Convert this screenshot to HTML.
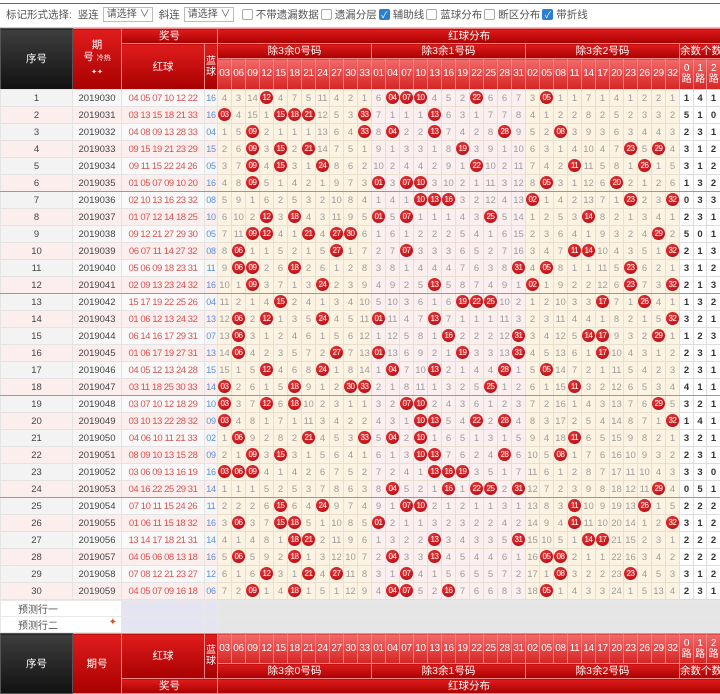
<!DOCTYPE html><html><head><meta charset="utf-8"><style>
*{box-sizing:border-box}
body{margin:0;width:720px;height:693px;overflow:hidden;background:#fff;font-family:"Liberation Sans","Noto Sans CJK SC",sans-serif;font-size:10px}
.bar{height:28px;border-top:2px solid #fff;position:relative;border-bottom:1px solid #ccc;color:#555;font-size:10.5px;display:flex;align-items:center;padding-left:6px;white-space:nowrap}
.bar:before{content:"";position:absolute;left:0;right:0;top:1px;height:1px;background:#d33}
.sel{display:inline-block;border:1px solid #bbb;height:15px;line-height:13px;padding:0 3px;margin:0 6px 0 4px;width:50px;font-size:10px}
.cb{display:inline-block;width:11px;height:11px;border:1px solid #aaa;border-radius:2px;vertical-align:-2px;margin:0 3px 0 2px;background:#fff}
.cb.on{background:#2a7fd4;border-color:#2a7fd4;color:#fff;font-size:9px;line-height:10px;text-align:center}
table{border-collapse:collapse;table-layout:fixed;width:720px}
td,th{padding:0;text-align:center;overflow:hidden;white-space:nowrap}
.h th{color:#fff;font-weight:normal;border:1px solid #e88;background:linear-gradient(#e01c1c,#a80000);font-size:10.5px;line-height:12px}
.h th.k{background:linear-gradient(#3e3e3e,#111);border-color:#555}
.h th.n{background:linear-gradient(#f26a6a,#d62424);font-size:10px;letter-spacing:-0.3px}
.h th.s{font-size:10px;line-height:11px}
.top{height:61px;overflow:hidden}
.d tr{height:17px}
.d td{height:17px;line-height:15px;border:1px solid #eadfcf;color:#9c9c9c;font-size:9.5px}
.d td:nth-child(1){color:#444;background:#f3f3f3;border-color:#e4e4e4}
.d td:nth-child(2){color:#444;background:#f7f7f7;border-color:#e4e4e4}
.d td:nth-child(3){color:#d9534f;background:#f9f9f9;border-color:#e4e4e4;font-size:9.5px;letter-spacing:-0.45px}
.d td:nth-child(4){color:#5a8fd6;background:#f6f6f6;border-color:#e4e4e4;font-size:9px;letter-spacing:-0.3px}
.d tr:nth-child(even) td:nth-child(-n+4){background:#fdeeee}
.d td:nth-child(n+5){background:#fdf3e2}
.d td:nth-child(n+16){background:#fbefef}
.d td:nth-child(n+27){background:#fdf3e2}
.d td:nth-child(n+38){background:#fff;color:#333;font-weight:bold;border-color:#ddd}
.d td:nth-child(16),.d td:nth-child(27),.d td:nth-child(38){border-left:1px solid #d8c8b8}
.d tr.g td{border-bottom:1px solid #999}
td b{display:inline-block;width:13px;height:13px;border-radius:50%;background:radial-gradient(circle at 40% 35%,#e93a3a,#b0000a);color:#fff;font-size:8px;line-height:13px;font-weight:normal;letter-spacing:-0.5px;vertical-align:middle}
.p td{height:16px;border:1px solid #e8e8e8;background:#e6e6e6}
.p td.w{background:#fff;color:#555;text-align:left;padding-left:17px;font-size:10px}
.p td.l{background:#e4e4f2}
</style></head><body>
<div class="bar">标记形式选择:&nbsp; 竖连<span class="sel">请选择 ∨</span>斜连<span class="sel">请选择 ∨</span><span class="cb"></span>不带遗漏数据 <span class="cb"></span>遗漏分层<span class="cb on">✓</span>辅助线 <span class="cb"></span>蓝球分布 <span class="cb"></span>断区分布<span class="cb on">✓</span>带折线</div>
<div class="top"><table class="h"><colgroup><col style="width:72px"><col style="width:49px"><col style="width:83px"><col style="width:13px"><col span="33" style="width:14px"><col style="width:14px"><col style="width:13px"><col style="width:14px"></colgroup>
<tr style="height:15px"><th class="k" rowspan="3">序号</th><th rowspan="3">期<br>号 <span style="font-size:7px">冷热<br>✦✦</span></th><th colspan="2">奖号</th><th colspan="36">红球分布</th></tr>
<tr style="height:15px"><th rowspan="2">红球</th><th rowspan="2" class="s">蓝<br>球</th><th colspan="11">除3余0号码</th><th colspan="11">除3余1号码</th><th colspan="11">除3余2号码</th><th colspan="3">余数个数</th></tr>
<tr style="height:31px"><th class="n">03</th><th class="n">06</th><th class="n">09</th><th class="n">12</th><th class="n">15</th><th class="n">18</th><th class="n">21</th><th class="n">24</th><th class="n">27</th><th class="n">30</th><th class="n">33</th><th class="n">01</th><th class="n">04</th><th class="n">07</th><th class="n">10</th><th class="n">13</th><th class="n">16</th><th class="n">19</th><th class="n">22</th><th class="n">25</th><th class="n">28</th><th class="n">31</th><th class="n">02</th><th class="n">05</th><th class="n">08</th><th class="n">11</th><th class="n">14</th><th class="n">17</th><th class="n">20</th><th class="n">23</th><th class="n">26</th><th class="n">29</th><th class="n">32</th><th class="n s">0<br>路</th><th class="n s">1<br>路</th><th class="n s">2<br>路</th></tr>
</table></div>
<table class="d"><colgroup><col style="width:72px"><col style="width:49px"><col style="width:83px"><col style="width:13px"><col span="33" style="width:14px"><col style="width:14px"><col style="width:13px"><col style="width:14px"></colgroup>
<tr><td>1<td>2019030<td>04 05 07 10 12 22<td>16<td>4<td>3<td>14<td><b>12</b><td>4<td>7<td>5<td>11<td>4<td>2<td>1<td>6<td><b>04</b><td><b>07</b><td><b>10</b><td>4<td>5<td>2<td><b>22</b><td>6<td>6<td>7<td>3<td><b>05</b><td>1<td>1<td>7<td>1<td>4<td>1<td>2<td>2<td>1<td>1<td>4<td>1</tr>
<tr><td>2<td>2019031<td>03 13 15 18 21 33<td>16<td><b>03</b><td>4<td>15<td>1<td><b>15</b><td><b>18</b><td><b>21</b><td>12<td>5<td>3<td><b>33</b><td>7<td>1<td>1<td>1<td><b>13</b><td>6<td>3<td>1<td>7<td>7<td>8<td>4<td>1<td>2<td>2<td>8<td>2<td>5<td>2<td>3<td>3<td>2<td>5<td>1<td>0</tr>
<tr><td>3<td>2019032<td>04 08 09 13 28 33<td>04<td>1<td>5<td><b>09</b><td>2<td>1<td>1<td>1<td>13<td>6<td>4<td><b>33</b><td>8<td><b>04</b><td>2<td>2<td><b>13</b><td>7<td>4<td>2<td>8<td><b>28</b><td>9<td>5<td>2<td><b>08</b><td>3<td>9<td>3<td>6<td>3<td>4<td>4<td>3<td>2<td>3<td>1</tr>
<tr><td>4<td>2019033<td>09 15 19 21 23 29<td>15<td>2<td>6<td><b>09</b><td>3<td><b>15</b><td>2<td><b>21</b><td>14<td>7<td>5<td>1<td>9<td>1<td>3<td>3<td>1<td>8<td><b>19</b><td>3<td>9<td>1<td>10<td>6<td>3<td>1<td>4<td>10<td>4<td>7<td><b>23</b><td>5<td><b>29</b><td>4<td>3<td>1<td>2</tr>
<tr><td>5<td>2019034<td>09 11 15 22 24 26<td>05<td>3<td>7<td><b>09</b><td>4<td><b>15</b><td>3<td>1<td><b>24</b><td>8<td>6<td>2<td>10<td>2<td>4<td>4<td>2<td>9<td>1<td><b>22</b><td>10<td>2<td>11<td>7<td>4<td>2<td><b>11</b><td>11<td>5<td>8<td>1<td><b>26</b><td>1<td>5<td>3<td>1<td>2</tr>
<tr class="g"><td>6<td>2019035<td>01 05 07 09 10 20<td>16<td>4<td>8<td><b>09</b><td>5<td>1<td>4<td>2<td>1<td>9<td>7<td>3<td><b>01</b><td>3<td><b>07</b><td><b>10</b><td>3<td>10<td>2<td>1<td>11<td>3<td>12<td>8<td><b>05</b><td>3<td>1<td>12<td>6<td><b>20</b><td>2<td>1<td>2<td>6<td>1<td>3<td>2</tr>
<tr><td>7<td>2019036<td>02 10 13 16 23 32<td>08<td>5<td>9<td>1<td>6<td>2<td>5<td>3<td>2<td>10<td>8<td>4<td>1<td>4<td>1<td><b>10</b><td><b>13</b><td><b>16</b><td>3<td>2<td>12<td>4<td>13<td><b>02</b><td>1<td>4<td>2<td>13<td>7<td>1<td><b>23</b><td>2<td>3<td><b>32</b><td>0<td>3<td>3</tr>
<tr><td>8<td>2019037<td>01 07 12 14 18 25<td>10<td>6<td>10<td>2<td><b>12</b><td>3<td><b>18</b><td>4<td>3<td>11<td>9<td>5<td><b>01</b><td>5<td><b>07</b><td>1<td>1<td>1<td>4<td>3<td><b>25</b><td>5<td>14<td>1<td>2<td>5<td>3<td><b>14</b><td>8<td>2<td>1<td>3<td>4<td>1<td>2<td>3<td>1</tr>
<tr><td>9<td>2019038<td>09 12 21 27 29 30<td>05<td>7<td>11<td><b>09</b><td><b>12</b><td>4<td>1<td><b>21</b><td>4<td><b>27</b><td><b>30</b><td>6<td>1<td>6<td>1<td>2<td>2<td>2<td>5<td>4<td>1<td>6<td>15<td>2<td>3<td>6<td>4<td>1<td>9<td>3<td>2<td>4<td><b>29</b><td>2<td>5<td>0<td>1</tr>
<tr><td>10<td>2019039<td>06 07 11 14 27 32<td>08<td>8<td><b>06</b><td>1<td>1<td>5<td>2<td>1<td>5<td><b>27</b><td>1<td>7<td>2<td>7<td><b>07</b><td>3<td>3<td>3<td>6<td>5<td>2<td>7<td>16<td>3<td>4<td>7<td><b>11</b><td><b>14</b><td>10<td>4<td>3<td>5<td>1<td><b>32</b><td>2<td>1<td>3</tr>
<tr><td>11<td>2019040<td>05 06 09 18 23 31<td>11<td>9<td><b>06</b><td><b>09</b><td>2<td>6<td><b>18</b><td>2<td>6<td>1<td>2<td>8<td>3<td>8<td>1<td>4<td>4<td>4<td>7<td>6<td>3<td>8<td><b>31</b><td>4<td><b>05</b><td>8<td>1<td>1<td>11<td>5<td><b>23</b><td>6<td>2<td>1<td>3<td>1<td>2</tr>
<tr class="g"><td>12<td>2019041<td>02 09 13 23 24 32<td>16<td>10<td>1<td><b>09</b><td>3<td>7<td>1<td>3<td><b>24</b><td>2<td>3<td>9<td>4<td>9<td>2<td>5<td><b>13</b><td>5<td>8<td>7<td>4<td>9<td>1<td><b>02</b><td>1<td>9<td>2<td>2<td>12<td>6<td><b>23</b><td>7<td>3<td><b>32</b><td>2<td>1<td>3</tr>
<tr><td>13<td>2019042<td>15 17 19 22 25 26<td>04<td>11<td>2<td>1<td>4<td><b>15</b><td>2<td>4<td>1<td>3<td>4<td>10<td>5<td>10<td>3<td>6<td>1<td>6<td><b>19</b><td><b>22</b><td><b>25</b><td>10<td>2<td>1<td>2<td>10<td>3<td>3<td><b>17</b><td>7<td>1<td><b>26</b><td>4<td>1<td>1<td>3<td>2</tr>
<tr><td>14<td>2019043<td>01 06 12 13 24 32<td>13<td>12<td><b>06</b><td>2<td><b>12</b><td>1<td>3<td>5<td><b>24</b><td>4<td>5<td>11<td><b>01</b><td>11<td>4<td>7<td><b>13</b><td>7<td>1<td>1<td>1<td>11<td>3<td>2<td>3<td>11<td>4<td>4<td>1<td>8<td>2<td>1<td>5<td><b>32</b><td>3<td>2<td>1</tr>
<tr><td>15<td>2019044<td>06 14 16 17 29 31<td>07<td>13<td><b>06</b><td>3<td>1<td>2<td>4<td>6<td>1<td>5<td>6<td>12<td>1<td>12<td>5<td>8<td>1<td><b>16</b><td>2<td>2<td>2<td>12<td><b>31</b><td>3<td>4<td>12<td>5<td><b>14</b><td><b>17</b><td>9<td>3<td>2<td><b>29</b><td>1<td>1<td>2<td>3</tr>
<tr><td>16<td>2019045<td>01 06 17 19 27 31<td>13<td>14<td><b>06</b><td>4<td>2<td>3<td>5<td>7<td>2<td><b>27</b><td>7<td>13<td><b>01</b><td>13<td>6<td>9<td>2<td>1<td><b>19</b><td>3<td>3<td>13<td><b>31</b><td>4<td>5<td>13<td>6<td>1<td><b>17</b><td>10<td>4<td>3<td>1<td>2<td>2<td>3<td>1</tr>
<tr><td>17<td>2019046<td>04 05 12 13 24 28<td>15<td>15<td>1<td>5<td><b>12</b><td>4<td>6<td>8<td><b>24</b><td>1<td>8<td>14<td>1<td><b>04</b><td>7<td>10<td><b>13</b><td>2<td>1<td>4<td>4<td><b>28</b><td>1<td>5<td><b>05</b><td>14<td>7<td>2<td>1<td>11<td>5<td>4<td>2<td>3<td>2<td>3<td>1</tr>
<tr class="g"><td>18<td>2019047<td>03 11 18 25 30 33<td>14<td><b>03</b><td>2<td>6<td>1<td>5<td><b>18</b><td>9<td>1<td>2<td><b>30</b><td><b>33</b><td>2<td>1<td>8<td>11<td>1<td>3<td>2<td>5<td><b>25</b><td>1<td>2<td>6<td>1<td>15<td><b>11</b><td>3<td>2<td>12<td>6<td>5<td>3<td>4<td>4<td>1<td>1</tr>
<tr><td>19<td>2019048<td>03 07 10 12 18 29<td>10<td><b>03</b><td>3<td>7<td><b>12</b><td>6<td><b>18</b><td>10<td>2<td>3<td>1<td>1<td>3<td>2<td><b>07</b><td><b>10</b><td>2<td>4<td>3<td>6<td>1<td>2<td>3<td>7<td>2<td>16<td>1<td>4<td>3<td>13<td>7<td>6<td><b>29</b><td>5<td>3<td>2<td>1</tr>
<tr><td>20<td>2019049<td>03 10 13 22 28 32<td>09<td><b>03</b><td>4<td>8<td>1<td>7<td>1<td>11<td>3<td>4<td>2<td>2<td>4<td>3<td>1<td><b>10</b><td><b>13</b><td>5<td>4<td><b>22</b><td>2<td><b>28</b><td>4<td>8<td>3<td>17<td>2<td>5<td>4<td>14<td>8<td>7<td>1<td><b>32</b><td>1<td>4<td>1</tr>
<tr><td>21<td>2019050<td>04 06 10 11 21 33<td>02<td>1<td><b>06</b><td>9<td>2<td>8<td>2<td><b>21</b><td>4<td>5<td>3<td><b>33</b><td>5<td><b>04</b><td>2<td><b>10</b><td>1<td>6<td>5<td>1<td>3<td>1<td>5<td>9<td>4<td>18<td><b>11</b><td>6<td>5<td>15<td>9<td>8<td>2<td>1<td>3<td>2<td>1</tr>
<tr><td>22<td>2019051<td>08 09 10 13 15 28<td>09<td>2<td>1<td><b>09</b><td>3<td><b>15</b><td>3<td>1<td>5<td>6<td>4<td>1<td>6<td>1<td>3<td><b>10</b><td><b>13</b><td>7<td>6<td>2<td>4<td><b>28</b><td>6<td>10<td>5<td><b>08</b><td>1<td>7<td>6<td>16<td>10<td>9<td>3<td>2<td>2<td>3<td>1</tr>
<tr><td>23<td>2019052<td>03 06 09 13 16 19<td>16<td><b>03</b><td><b>06</b><td><b>09</b><td>4<td>1<td>4<td>2<td>6<td>7<td>5<td>2<td>7<td>2<td>4<td>1<td><b>13</b><td><b>16</b><td><b>19</b><td>3<td>5<td>1<td>7<td>11<td>6<td>1<td>2<td>8<td>7<td>17<td>11<td>10<td>4<td>3<td>3<td>3<td>0</tr>
<tr class="g"><td>24<td>2019053<td>04 16 22 25 29 31<td>14<td>1<td>1<td>1<td>5<td>2<td>5<td>3<td>7<td>8<td>6<td>3<td>8<td><b>04</b><td>5<td>2<td>1<td><b>16</b><td>1<td><b>22</b><td><b>25</b><td>2<td><b>31</b><td>12<td>7<td>2<td>3<td>9<td>8<td>18<td>12<td>11<td><b>29</b><td>4<td>0<td>5<td>1</tr>
<tr><td>25<td>2019054<td>07 10 11 15 24 26<td>11<td>2<td>2<td>2<td>6<td><b>15</b><td>6<td>4<td><b>24</b><td>9<td>7<td>4<td>9<td>1<td><b>07</b><td><b>10</b><td>2<td>1<td>2<td>1<td>1<td>3<td>1<td>13<td>8<td>3<td><b>11</b><td>10<td>9<td>19<td>13<td><b>26</b><td>1<td>5<td>2<td>2<td>2</tr>
<tr><td>26<td>2019055<td>01 06 11 15 18 32<td>16<td>3<td><b>06</b><td>3<td>7<td><b>15</b><td><b>18</b><td>5<td>1<td>10<td>8<td>5<td><b>01</b><td>2<td>1<td>1<td>3<td>2<td>3<td>2<td>2<td>4<td>2<td>14<td>9<td>4<td><b>11</b><td>11<td>10<td>20<td>14<td>1<td>2<td><b>32</b><td>3<td>1<td>2</tr>
<tr><td>27<td>2019056<td>13 14 17 18 21 31<td>14<td>4<td>1<td>4<td>8<td>1<td><b>18</b><td><b>21</b><td>2<td>11<td>9<td>6<td>1<td>3<td>2<td>2<td><b>13</b><td>3<td>4<td>3<td>3<td>5<td><b>31</b><td>15<td>10<td>5<td>1<td><b>14</b><td><b>17</b><td>21<td>15<td>2<td>3<td>1<td>2<td>2<td>2</tr>
<tr><td>28<td>2019057<td>04 05 06 08 13 18<td>16<td>5<td><b>06</b><td>5<td>9<td>2<td><b>18</b><td>1<td>3<td>12<td>10<td>7<td>2<td><b>04</b><td>3<td>3<td><b>13</b><td>4<td>5<td>4<td>4<td>6<td>1<td>16<td><b>05</b><td><b>08</b><td>2<td>1<td>1<td>22<td>16<td>3<td>4<td>2<td>2<td>2<td>2</tr>
<tr><td>29<td>2019058<td>07 08 12 21 23 27<td>12<td>6<td>1<td>6<td><b>12</b><td>3<td>1<td><b>21</b><td>4<td><b>27</b><td>11<td>8<td>3<td>1<td><b>07</b><td>4<td>1<td>5<td>6<td>5<td>5<td>7<td>2<td>17<td>1<td><b>08</b><td>3<td>2<td>2<td>23<td><b>23</b><td>4<td>5<td>3<td>3<td>1<td>2</tr>
<tr><td>30<td>2019059<td>04 05 07 09 16 18<td>06<td>7<td>2<td><b>09</b><td>1<td>4<td><b>18</b><td>1<td>5<td>1<td>12<td>9<td>4<td><b>04</b><td><b>07</b><td>5<td>2<td><b>16</b><td>7<td>6<td>6<td>8<td>3<td>18<td><b>05</b><td>1<td>4<td>3<td>3<td>24<td>1<td>5<td>13<td>4<td>2<td>3<td>1</tr>
</table>
<table class="p"><colgroup><col style="width:121px"><col style="width:83px"><col style="width:13px"><col style="width:503px"></colgroup>
<tr><td class="w">预测行一</td><td class="l"></td><td class="l"></td><td></td></tr>
<tr><td class="w">预测行二<span style="float:right;margin-right:4px;color:#e05020">✦</span></td><td class="l"></td><td class="l"></td><td></td></tr>
</table>
<table class="h"><colgroup><col style="width:72px"><col style="width:49px"><col style="width:83px"><col style="width:13px"><col span="33" style="width:14px"><col style="width:14px"><col style="width:13px"><col style="width:14px"></colgroup>
<tr style="height:30px"><th class="k" rowspan="3">序号</th><th rowspan="3">期号</th><th rowspan="2">红球</th><th rowspan="2" class="s">蓝<br>球</th><th class="n">03</th><th class="n">06</th><th class="n">09</th><th class="n">12</th><th class="n">15</th><th class="n">18</th><th class="n">21</th><th class="n">24</th><th class="n">27</th><th class="n">30</th><th class="n">33</th><th class="n">01</th><th class="n">04</th><th class="n">07</th><th class="n">10</th><th class="n">13</th><th class="n">16</th><th class="n">19</th><th class="n">22</th><th class="n">25</th><th class="n">28</th><th class="n">31</th><th class="n">02</th><th class="n">05</th><th class="n">08</th><th class="n">11</th><th class="n">14</th><th class="n">17</th><th class="n">20</th><th class="n">23</th><th class="n">26</th><th class="n">29</th><th class="n">32</th><th class="n s">0<br>路</th><th class="n s">1<br>路</th><th class="n s">2<br>路</th></tr>
<tr style="height:15px"><th colspan="11">除3余0号码</th><th colspan="11">除3余1号码</th><th colspan="11">除3余2号码</th><th colspan="3">余数个数</th></tr>
<tr style="height:15px"><th colspan="2">奖号</th><th colspan="36">红球分布</th></tr>
</table>
</body></html>
